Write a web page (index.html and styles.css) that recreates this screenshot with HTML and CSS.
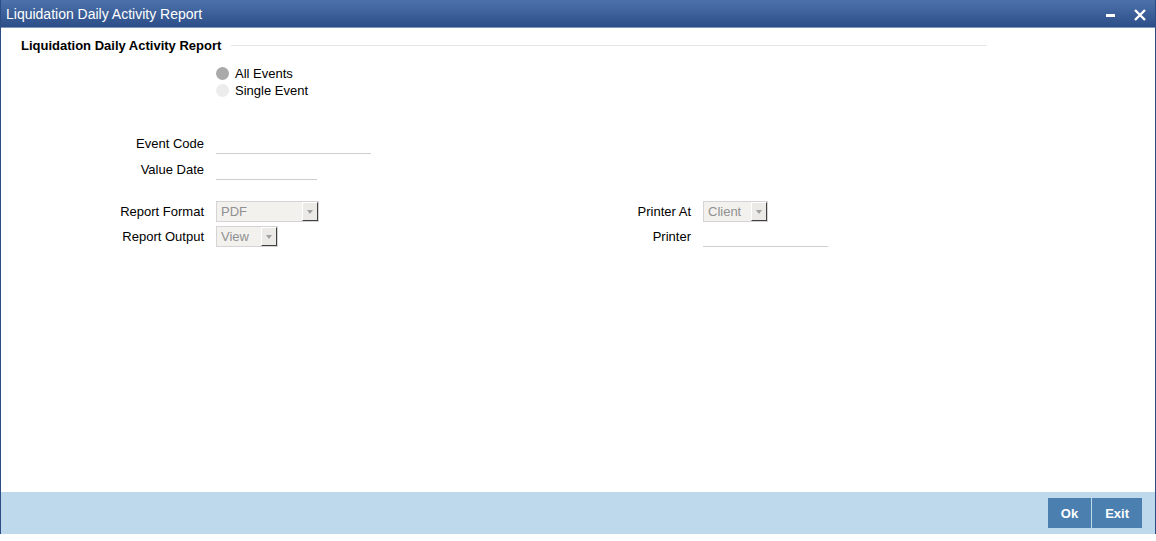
FILE: index.html
```html
<!DOCTYPE html>
<html lang="en">
<head>
    <meta charset="UTF-8">
    <title>Liquidation Daily Activity Report</title>
    <link rel="stylesheet" href="styles.css">
</head>
<body>
    <div class="window">
        <header class="titlebar">
            <span class="title">Liquidation Daily Activity Report</span>
            <div class="win-ctrls">
                <svg class="ico" width="12" height="12" viewBox="0 0 12 12"><rect x="1" y="5" width="9" height="3" fill="#fff"/></svg>
                <svg class="ico" width="14" height="14" viewBox="0 0 14 14"><path d="M2 2 L12 12 M12 2 L2 12" stroke="#fff" stroke-width="2.4"/></svg>
            </div>
        </header>

        <main class="content">
            <div class="section">
                <div class="section-head">
                    <h2>Liquidation Daily Activity Report</h2>
                    <div class="rule"></div>
                </div>

                <div class="radios">
                    <label class="radio"><span class="dot on"></span>All Events</label>
                    <label class="radio"><span class="dot"></span>Single Event</label>
                </div>

                <div class="rows">
                    <div class="row">
                        <span class="lbl">Event Code</span>
                        <span class="txt w155"></span>
                    </div>
                    <div class="row">
                        <span class="lbl">Value Date</span>
                        <span class="txt w101"></span>
                    </div>
                </div>

                <div class="cols">
                    <div class="col">
                        <div class="row">
                            <span class="lbl">Report Format</span>
                            <span class="sel w103"><span class="val">PDF</span><span class="arrow"></span></span>
                        </div>
                        <div class="row">
                            <span class="lbl">Report Output</span>
                            <span class="sel w62"><span class="val">View</span><span class="arrow"></span></span>
                        </div>
                    </div>
                    <div class="col">
                        <div class="row">
                            <span class="lbl">Printer At</span>
                            <span class="sel w65"><span class="val">Client</span><span class="arrow"></span></span>
                        </div>
                        <div class="row">
                            <span class="lbl">Printer</span>
                            <span class="txt w125"></span>
                        </div>
                    </div>
                </div>
            </div>
        </main>

        <footer class="footer">
            <button class="btn">Ok</button>
            <button class="btn">Exit</button>
        </footer>
    </div>
</body>
</html>
```

FILE: styles.css
```css
body {
    margin: 0;
    font-family: "Liberation Sans", Arial, sans-serif;
    font-size: 13px;
    color: #000;
    background: #fff;
}

.window {
    width: 1154px;
    height: 534px;
    border-left: 1px solid #2b4d86;
    border-right: 1px solid #2b4d86;
    display: flex;
    flex-direction: column;
}

.titlebar {
    height: 27px;
    background: linear-gradient(#4d72aa, #2c4e88);
    border-bottom: 1px solid #7f97b8;
    display: flex;
    align-items: center;
    justify-content: space-between;
    padding: 0 8px 0 5px;
}

.title {
    color: #fff;
    font-size: 14px;
}

.win-ctrls {
    display: flex;
    align-items: center;
    gap: 16px;
    padding-top: 2px;
}

.content {
    flex: 1;
}

.section {
    margin-left: 20px;
    width: 966px;
    padding-top: 9px;
}

.section-head {
    display: flex;
    align-items: center;
    height: 16px;
}

.section-head h2 {
    margin: 0;
    font-size: 13px;
    font-weight: bold;
    white-space: nowrap;
}

.rule {
    flex: 1;
    margin-left: 10px;
    border-top: 1px solid #e6e6e6;
}

.radios {
    margin: 12px 0 0 195px;
    display: flex;
    flex-direction: column;
}

.radio {
    display: flex;
    align-items: center;
    height: 17px;
}

.dot {
    width: 13px;
    height: 13px;
    border-radius: 50%;
    background: #ececec;
    margin-right: 6px;
}

.dot.on {
    background: #a9a9a9;
}

.rows {
    margin-top: 34px;
    display: flex;
    flex-direction: column;
    gap: 6px;
}

.row {
    display: flex;
    align-items: center;
    height: 20px;
}

.lbl {
    width: 183px;
    flex: none;
    text-align: right;
    margin-right: 12px;
    white-space: nowrap;
}

.txt {
    height: 20px;
    border-bottom: 1px solid #cfcfcf;
}

.w155 { width: 155px; }
.w101 { width: 101px; }
.w125 { width: 125px; }
.w103 { width: 103px; }
.w62 { width: 62px; }
.w65 { width: 65px; }

.cols {
    margin-top: 22px;
    display: flex;
}

.col {
    width: 487px;
    flex: none;
    display: flex;
    flex-direction: column;
    gap: 5px;
}

.sel {
    box-sizing: border-box;
    height: 21px;
    background: #f2f1ee;
    border: 1px solid #d4d4d4;
    display: flex;
    align-items: center;
    justify-content: space-between;
    color: #909090;
}

.val {
    padding-left: 4px;
}

.arrow {
    box-sizing: border-box;
    width: 16px;
    height: 19px;
    border-top: 1px solid #fff;
    border-left: 1px solid #fff;
    border-right: 1px solid #404040;
    border-bottom: 1px solid #404040;
    background: #ebeae6;
    position: relative;
}

.arrow::after {
    content: "";
    position: absolute;
    left: 4px;
    top: 7px;
    border-left: 3px solid transparent;
    border-right: 3px solid transparent;
    border-top: 4px solid #a0a0a0;
}

.footer {
    height: 42px;
    background: #bfd9ec;
    display: flex;
    justify-content: flex-end;
    align-items: center;
    gap: 1px;
    padding-right: 13px;
}

.btn {
    height: 30px;
    padding: 0 13px;
    background: #4a7fb0;
    color: #fff;
    border: none;
    font-family: "Liberation Sans", Arial, sans-serif;
    font-size: 13px;
    font-weight: bold;
}
```
